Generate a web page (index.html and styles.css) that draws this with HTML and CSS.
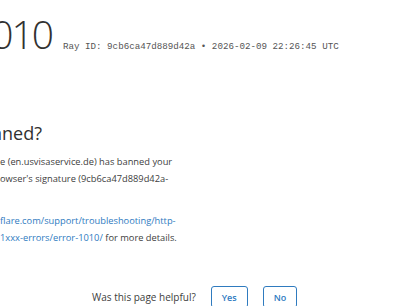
FILE: index.html
```html
<!DOCTYPE html>
<html lang="en">
<head>
<meta charset="utf-8">
<title>Access denied | en.usvisaservice.de used Cloudflare to restrict access</title>
<link rel="stylesheet" href="styles.css">
</head>
<body>
<main class="page">
  <header class="title-row">
    <h1 class="code">Error 1010</h1>
    <span class="ray">Ray ID: 9cb6ca47d889d42a &bull; 2026-02-09 22:26:45 UTC</span>
  </header>

  <section class="why">
    <h2 class="why-title">Why have I been banned?</h2>
    <p class="para">
      <span class="line">e (en.usvisaservice.de) has banned your</span>
      <span class="line">owser's signature (9cb6ca47d889d42a-</span>
      <span class="line"></span>
    </p>
    <p class="para">
      <span class="line"><a class="link" href="#">flare.com/support/troubleshooting/http-</a></span>
      <span class="line"><a class="link" href="#">1xxx-errors/error-1010/</a> for more details.</span>
    </p>
  </section>

  <footer class="feedback">
    <span class="feedback-q">Was this page helpful?</span>
    <button class="fb-btn" type="button">Yes</button>
    <button class="fb-btn" type="button">No</button>
  </footer>
</main>
</body>
</html>
```

FILE: styles.css
```css
html, body {
  margin: 0;
  padding: 0;
  background: #ffffff;
}

body {
  width: 400px;
  height: 306px;
  overflow: hidden;
  font-family: "Open Sans", "Noto Sans", "Liberation Sans", sans-serif;
  color: #404040;
}

.page {
  padding-top: 14px;
}

.title-row {
  display: flex;
  align-items: baseline;
}

.code {
  flex: none;
  width: 240px;
  margin: 0 0 0 -188px;
  text-align: right;
  white-space: nowrap;
  font-size: 39px;
  line-height: 39px;
  font-weight: 300;
  letter-spacing: -2px;
  color: #313131;
}

.ray {
  margin-left: 11px;
  font-family: "Liberation Mono", "DejaVu Sans Mono", monospace;
  font-size: 9.2px;
  color: #555555;
  white-space: nowrap;
}

.why {
  margin-top: 68px;
}

.why-title {
  width: 300px;
  margin: 0 0 0 -258px;
  text-align: right;
  white-space: nowrap;
  font-size: 18px;
  line-height: 24px;
  font-weight: 400;
  color: #313131;
}

.para {
  margin: 8px 0 0 0;
  font-size: 9.3px;
  line-height: 17px;
}

.line {
  display: block;
  height: 17px;
  white-space: nowrap;
}

.link {
  color: #2f7bbf;
  text-decoration: none;
}

.feedback {
  display: flex;
  align-items: center;
  gap: 15px;
  margin-top: 40px;
  padding-left: 92px;
}

.feedback-q {
  font-size: 10px;
  color: #404040;
}

.fb-btn {
  font-family: "Open Sans", "Noto Sans", sans-serif;
  font-size: 9px;
  font-weight: 600;
  color: #2f7bbf;
  background: #ffffff;
  border: 1px solid #2f7bbf;
  border-radius: 3px;
  height: 22px;
  padding: 0 10px;
}
```
